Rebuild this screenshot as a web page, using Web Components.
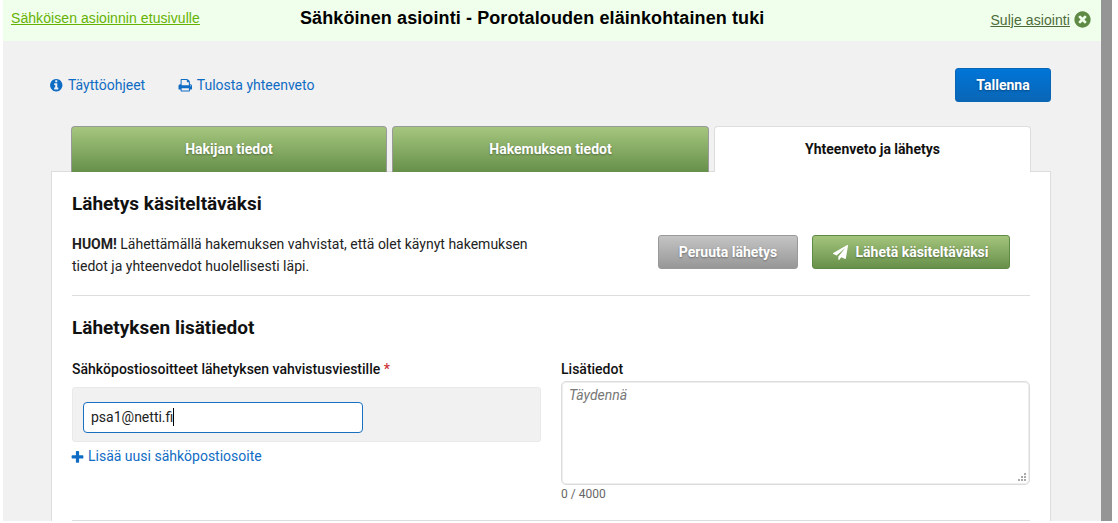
<!DOCTYPE html>
<html lang="fi">
<head>
<meta charset="utf-8">
<title>Sähköinen asiointi</title>
<style>
html,body{margin:0;padding:0;background:#fff;overflow:hidden;height:523px}
body{font-family:Roboto,"Liberation Sans",sans-serif;font-size:14px;color:#1a1a1a}
</style>
</head>
<body>
<app-frame>
  <top-bar slot="top">
    <a-link slot="left" tone="green" underline>Sähköisen asioinnin etusivulle</a-link>
    <span slot="title">Sähköinen asiointi - Porotalouden eläinkohtainen tuki</span>
    <a-link slot="right" tone="dark" underline>Sulje asiointi</a-link>
  </top-bar>
  <tool-bar>
    <a-link slot="links" icon="info">Täyttöohjeet</a-link>
    <a-link slot="links" icon="print">Tulosta yhteenveto</a-link>
    <a-btn slot="save" tone="blue" style="width:96px">Tallenna</a-btn>
  </tool-bar>
  <tab-bar>
    <tab-item style="flex-basis:316px">Hakijan tiedot</tab-item>
    <tab-item>Hakemuksen tiedot</tab-item>
    <tab-item active>Yhteenveto ja lähetys</tab-item>
  </tab-bar>
  <main-panel>
    <send-section>
      <span slot="heading">Lähetys käsiteltäväksi</span>
      <span slot="note"><b>HUOM!</b> Lähettämällä hakemuksen vahvistat, että olet käynyt hakemuksen<br>tiedot ja yhteenvedot huolellisesti läpi.</span>
      <a-btn slot="actions" tone="gray" style="width:140px">Peruuta lähetys</a-btn>
      <a-btn slot="actions" tone="green" icon="plane" style="width:198px">Lähetä käsiteltäväksi</a-btn>
    </send-section>
    <extra-section>
      <span slot="heading">Lähetyksen lisätiedot</span>
      <email-field slot="left" value="psa1@netti.fi">Sähköpostiosoitteet lähetyksen vahvistusviestille</email-field>
      <notes-field slot="right" placeholder="Täydennä" count="0 / 4000">Lisätiedot</notes-field>
    </extra-section>
  </main-panel>
</app-frame>
<script>
const ICONS={
info:"M1152 1376v-160q0-14-9-23t-23-9h-96v-512q0-14-9-23t-23-9h-320q-14 0-23 9t-9 23v160q0 14 9 23t23 9h96v320h-96q-14 0-23 9t-9 23v160q0 14 9 23t23 9h448q14 0 23-9t9-23zm-128-896v-160q0-14-9-23t-23-9h-192q-14 0-23 9t-9 23v160q0 14 9 23t23 9h192q14 0 23-9t9-23zm640 416q0 209-103 385.5t-279.5 279.5-385.5 103-385.5-103-279.5-279.5-103-385.5 103-385.5 279.5-279.5 385.5-103 385.5 103 279.5 279.5 103 385.5z",
close:"M1277 1122q0-26-19-45l-181-181 181-181q19-19 19-45 0-27-19-46l-90-90q-19-19-46-19-26 0-45 19l-181 181-181-181q-19-19-45-19-27 0-46 19l-90 90q-19 19-19 46 0 26 19 45l181 181-181 181q-19 19-19 45 0 27 19 46l90 90q19 19 46 19 26 0 45-19l181-181 181 181q19 19 45 19 27 0 46-19l90-90q19-19 19-46zm387-226q0 209-103 385.5t-279.5 279.5-385.5 103-385.5-103-279.5-279.5-103-385.5 103-385.5 279.5-279.5 385.5-103 385.5 103 279.5 279.5 103 385.5z",
print:"M448 1536h896v-256h-896v256zm0-640h896v-384h-160q-40 0-68-28t-28-68v-160h-640v640zm1152 64q0-26-19-45t-45-19-45 19-19 45 19 45 45 19 45-19 19-45zm128 0v416q0 13-9.5 22.5t-22.5 9.5h-224v160q0 40-28 68t-68 28h-960q-40 0-68-28t-28-68v-160h-224q-13 0-22.5-9.5t-9.5-22.5v-416q0-79 56.5-135.5t135.5-56.5h64v-544q0-40 28-68t68-28h672q40 0 88 20t76 48l152 152q28 28 48 76t20 88v256h64q79 0 135.5 56.5t56.5 135.5z",
plane:"M1764 11q33 24 27 64l-256 1536q-5 29-32 45-14 8-31 8-11 0-24-5l-453-185-242 295q-18 23-49 23-13 0-22-4-19-7-30.5-23.5t-11.5-36.5v-349l864-1059-1069 925-395-162q-37-14-40-55-2-40 32-59l1664-960q15-9 32-9 20 0 36 11z",
plus:"M1600 736v192q0 40-28 68t-68 28h-416v416q0 40-28 68t-68 28h-192q-40 0-68-28t-28-68v-416h-416q-40 0-68-28t-28-68v-192q0-40 28-68t68-28h416v-416q0-40 28-68t68-28h192q40 0 68 28t28 68v416h416q40 0 68 28t28 68z"
};
const svg=(n,s,c)=>`<svg xmlns="http://www.w3.org/2000/svg" viewBox="0 0 1792 1792" width="${s}" height="${s}" fill="${c}" aria-hidden="true" style="display:block;flex:none"><path d="${ICONS[n]}"/></svg>`;
function def(name,html){
  customElements.define(name,class extends HTMLElement{
    constructor(){super();this.attachShadow({mode:"open"});}
    connectedCallback(){this.shadowRoot.innerHTML=typeof html==="function"?html(this):html;}
  });
}
def("app-frame",`<style>
:host{display:flex;width:1112px;height:521px;padding-left:3px;box-sizing:border-box;overflow:hidden}
.page{width:1098px;background:#f1f1f1;display:flex;flex-direction:column;overflow:hidden}
.bar{width:11px;background:#959595;flex:none}
</style><div class="page"><slot name="top"></slot><slot></slot></div><div class="bar"></div>`);
def("top-bar",`<style>
:host{display:grid;grid-template-columns:297px 1fr auto;align-items:center;height:41px;background:#f0ffeb;font-family:"Liberation Sans",Arial,sans-serif;flex:none}
.l{padding-left:8px;padding-bottom:5px;letter-spacing:.07px}
.t{font-size:18px;font-weight:700;color:#000;padding-bottom:5px;letter-spacing:.1px}
.r{display:flex;align-items:center;gap:3.3px;padding-right:8.7px;padding-bottom:2px;letter-spacing:.07px}
</style><div class="l"><slot name="left"></slot></div><div class="t"><slot name="title"></slot></div><div class="r"><slot name="right"></slot>${svg("close",19,"#5f8a45")}</div>`);
def("a-link",h=>{
  const t=h.getAttribute("tone");
  const c=t==="green"?"#66b204":t==="dark"?"#4d6b3a":"#0f6cc4";
  const ic=h.getAttribute("icon");
  return `<style>
:host{display:inline-flex;align-items:center;gap:${ic==="print"?4:4.5}px;color:${c};font-size:14px;line-height:18px;${h.hasAttribute("underline")?"text-decoration:underline;":""}}
</style>${ic?svg(ic,14.5,"#0f6cc4"):""}<slot></slot>`;
});
def("tool-bar",`<style>
:host{display:flex;align-items:center;justify-content:space-between;margin:27px 50px 24px 46px;height:34px;flex:none}
.links{display:flex;gap:33px}
</style><div class="links"><slot name="links"></slot></div><slot name="save"></slot>`);
def("a-btn",h=>{
  const t=h.getAttribute("tone");
  const m={blue:["#0075d9","#0a66b5","#0a66b5"],gray:["#c4c4c4","#979797","#999"],green:["#a4c47c","#67904a","#5f8a45"]}[t];
  const ic=h.getAttribute("icon");
  return `<style>
:host{display:inline-flex;align-items:center;justify-content:center;gap:7px;height:34px;box-sizing:border-box;border-radius:3px;border:1px solid ${m[2]};background:linear-gradient(${m[0]},${m[1]});color:#fff;font:700 14px Roboto,sans-serif;text-shadow:0 1px 2px rgba(0,0,0,.35)}
</style>${ic?svg(ic,15,"#fff"):""}<slot></slot>`;
});
def("tab-bar",`<style>
:host{display:flex;gap:5px;margin:0 70px -1px 68px;height:46px;position:relative;z-index:1;flex:none}
</style><slot></slot>`);
def("tab-item",h=>{
  const a=h.hasAttribute("active");
  return `<style>
:host{flex:0 0 317px;box-sizing:border-box;display:flex;align-items:center;justify-content:center;border-radius:4px 4px 0 0;font:700 14px Roboto,sans-serif;padding-bottom:1px;${a?"background:#fff;border:1px solid #ddd;border-bottom:0;color:#111":"background:linear-gradient(#a6c67e,#66904a);border:1px solid #999;border-bottom:0;color:#fff;text-shadow:0 1px 2px rgba(0,0,0,.35)"}}
</style><slot></slot>`;
});
def("main-panel",`<style>
:host{display:block;margin:0 50px 0 48px;background:#fff;border:1px solid #ddd;border-bottom:0;padding:0 20px;flex:1}
</style><slot></slot>`);
const H=`h2{margin:0;font:700 19px/24px Roboto,sans-serif;color:#111}`;
def("send-section",`<style>
:host{display:block;border-bottom:1px solid #ddd;height:124px;padding-top:20px;box-sizing:border-box}
${H}
.row{display:flex;justify-content:space-between;margin-top:14px}
.note{width:470px;font-size:14px;line-height:22px;color:#222;padding-top:3px}
.act{display:flex;gap:14px;margin-right:20px;padding-top:5px}
</style><h2><slot name="heading"></slot></h2><div class="row"><div class="note"><slot name="note"></slot></div><div class="act"><slot name="actions"></slot></div></div>`);
def("extra-section",`<style>
:host{display:block;padding-top:20px;height:225px;box-sizing:border-box;border-bottom:1px solid #ddd}
${H}
.cols{display:grid;grid-template-columns:469px 469px;gap:20px;margin-top:20px}
</style><h2><slot name="heading"></slot></h2><div class="cols"><slot name="left"></slot><slot name="right"></slot></div>`);
def("email-field",h=>`<style>
:host{display:block}
label{display:block;font:500 14px/18px Roboto,sans-serif;color:#111}
i{font-style:normal;color:#c33}
.box{margin-top:9px;height:55px;box-sizing:border-box;background:#f1f1f1;border:1px solid #e9e9e9;border-radius:3px;padding:14px 10px 0}
.inp{width:280px;height:31px;box-sizing:border-box;background:#fff;border:1px solid #1a70c0;border-radius:4px;padding:0 7px;font-size:14px;line-height:29px;color:#222;display:flex}
.caret{width:1px;height:18px;background:#000;margin:5px 0 0 0}
.add{display:flex;align-items:center;gap:3px;margin:5px 0 0 -2px;color:#0f6cc4;font-size:14px;line-height:18px}
.add svg{position:relative;top:1px}
</style><label><slot></slot> <i>*</i></label><div class="box"><div class="inp"><span>${h.getAttribute("value")}</span><span class="caret"></span></div></div><div class="add">${svg("plus",15,"#0f6cc4")}<span>Lisää uusi sähköpostiosoite</span></div>`);
def("notes-field",h=>`<style>
:host{display:block}
label{display:block;font:500 14px/18px Roboto,sans-serif;color:#111}
.ta{position:relative;margin-top:3px;height:104px;box-sizing:border-box;background:#fff;border:1px solid #dcdcdc;border-radius:5px;padding:4px 7px;font-size:14px;line-height:18px;font-style:italic;color:#777;box-shadow:inset 0 0 0 1px #eee}
.ta svg{position:absolute;right:2px;bottom:2px}
.n{font-size:12px;line-height:16px;color:#666;margin-top:1px}
</style><label><slot></slot></label><div class="ta">${h.getAttribute("placeholder")}<svg width="9" height="9" viewBox="0 0 9 9" fill="#aaa"><rect x="6" y="0" width="2" height="2"/><rect x="3" y="3" width="2" height="2"/><rect x="6" y="3" width="2" height="2"/><rect x="0" y="6" width="2" height="2"/><rect x="3" y="6" width="2" height="2"/><rect x="6" y="6" width="2" height="2"/></svg></div><div class="n">${h.getAttribute("count")}</div>`);
</script>
</body>
</html>
